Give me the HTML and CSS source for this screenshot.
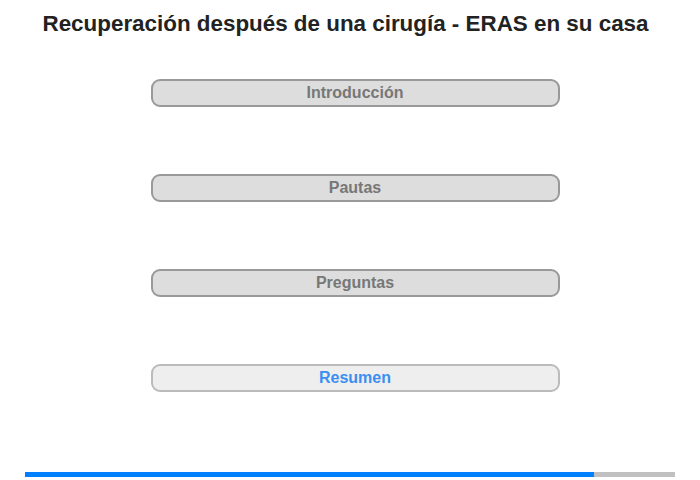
FILE: index.html
```html
<!DOCTYPE html>
<html lang="es">
<head>
    <meta charset="UTF-8">
    <title>ERAS en su casa</title>
    <link rel="stylesheet" href="styles.css">
</head>
<body>
<div class="page">
    <h1>Recuperación después de una cirugía - ERAS en su casa</h1>

    <div class="menu">
        <button class="menu-btn">Introducción</button>
        <button class="menu-btn">Pautas</button>
        <button class="menu-btn">Preguntas</button>
        <button class="menu-btn current">Resumen</button>
    </div>

    <div class="progress">
        <div class="progress-fill" style="width: 87.5%"></div>
    </div>
</div>
</body>
</html>
```

FILE: styles.css
```css
body {
    margin: 0;
    font-family: 'Liberation Sans', Arial, sans-serif;
    background-color: white;
}
.page {
    width: 700px;
    height: 480px;
    display: flex;
    flex-direction: column;
    align-items: center;
}
h1 {
    margin: 11px 9px 0 0;
    font-size: 22.4px;
    line-height: 25px;
    color: #222;
    text-align: center;
}
.menu {
    display: flex;
    flex-direction: column;
    gap: 67px;
    margin-top: 43px;
    margin-left: 10px;
}
.menu-btn {
    width: 409px;
    height: 28px;
    padding: 0;
    background-color: #dddddd;
    border: 2px solid #999;
    border-radius: 9px;
    font-family: 'Liberation Sans', Arial, sans-serif;
    font-size: 16px;
    font-weight: bold;
    color: #777;
    cursor: pointer;
}
.menu-btn.current {
    background-color: #eeeeee;
    border-color: #bbb;
    color: #3b8ff0;
}
.progress {
    width: 650px;
    height: 5px;
    margin-top: auto;
    margin-bottom: 3px;
    background-color: #c0c0c0;
}
.progress-fill {
    height: 100%;
    background-color: #0080ff;
}
```
